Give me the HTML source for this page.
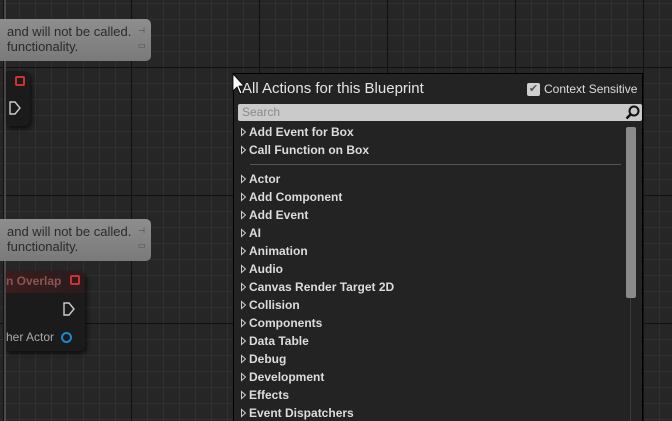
<!DOCTYPE html>
<html><head><meta charset="utf-8"><style>
*{margin:0;padding:0;box-sizing:border-box}
html{width:672px;height:421px;overflow:hidden}
body{width:672px;height:421px;overflow:hidden;position:relative;font-family:"Liberation Sans",sans-serif;
background-color:#262626;
background-image:
linear-gradient(90deg,#111 1px,transparent 1px),
linear-gradient(0deg,#111 1px,transparent 1px),
linear-gradient(90deg,#303030 1px,transparent 1px),
linear-gradient(0deg,#303030 1px,transparent 1px);
background-size:128px 128px,128px 128px,16px 16px,16px 16px;
background-position:3px 0,0 68px,3px 0,0 4px;}
.abs{position:absolute}
.cm{position:absolute;left:0;width:151px;height:42px;background:linear-gradient(#8e8e8e,#7a7a7a);border-radius:0 5px 5px 0;color:#2a2a2a;font-size:13px;line-height:15px;padding:5px 0 0 7px}
.cm .r{position:absolute;right:4px;top:4px;width:9px;height:14px;color:#444;font-size:8px}
.node{position:absolute;background:#1b1b1b;border-radius:0 6px 6px 0;box-shadow:2px 3px 4px rgba(0,0,0,.6)}
.pin{position:absolute;width:10px;height:10px;border:2px solid #c33;border-radius:2px}
.panel{position:absolute;left:233px;top:73px;width:410px;height:348px;background:#232323;border:1px solid #000;border-bottom:none;overflow:hidden}
.item{position:absolute;left:15px;color:#dcdcdc;font-weight:bold;font-size:12px;white-space:nowrap}
.tri{position:absolute;left:7px;width:6px;height:10px}
</style></head><body>
<div class="abs" style="left:4px;top:0;width:2px;height:421px;background:#4a4a4a"></div>
<div class="cm" style="top:19px">and will not be called.<br>functionality.<div class="r">⊣<br>▭</div></div>
<div class="cm" style="top:219px">and will not be called.<br>functionality.<div class="r">⊣<br>▭</div></div>
<div class="node" style="left:6px;top:71px;width:24px;height:55px">
<div class="pin" style="left:9px;top:5px"></div>
<svg class="abs" style="left:3px;top:30px" width="12" height="14"><path d="M1 1H6L11 7L6 13H1Z" fill="none" stroke="#ccc" stroke-width="1.4"/></svg>
</div>
<div class="node" style="left:6px;top:271px;width:79px;height:80px">
<div class="abs" style="left:0;top:0;width:79px;height:22px;background:linear-gradient(90deg,#3a1d1d,#2a1b1b);border-radius:0 6px 0 0"></div>
<div class="abs" style="left:0;top:3px;color:#8a5555;font-weight:bold;font-size:12px">n Overlap</div>
<div class="pin" style="left:64px;top:4px"></div>
<svg class="abs" style="left:57px;top:31px" width="12" height="14"><path d="M1 1H6L11 7L6 13H1Z" fill="none" stroke="#ccc" stroke-width="1.4"/></svg>
<div class="abs" style="left:0;top:59px;color:#aaa;font-size:12px">her Actor</div>
<div class="abs" style="left:55px;top:61px;width:11px;height:11px;border:2px solid #1a8ad0;border-radius:50%"></div>
</div>
<div class="panel">
<div class="abs" style="left:8px;top:6px;color:#e4e4e4;font-size:15px">All Actions for this Blueprint</div>
<div class="abs" style="left:293px;top:9px;width:13px;height:13px;background:#d0d0d0;border-radius:2px;color:#555;font-size:11px;line-height:13px;text-align:center">✔</div>
<div class="abs" style="left:310px;top:8px;color:#dcdcdc;font-size:12px">Context Sensitive</div>
<div class="abs" style="left:4px;top:30px;width:404px;height:17px;background:#cacaca;border-radius:2px;color:#8a8a8a;font-size:12px;padding:1px 4px">Search
<svg class="abs" style="right:2px;top:1px" width="15" height="15"><circle cx="9" cy="6" r="4.5" fill="none" stroke="#111" stroke-width="2"/><path d="M6 9L1.5 13.5" stroke="#111" stroke-width="2.5"/></svg></div>
<div class="abs" style="left:396px;top:56px;width:1px;height:304px;background:#3a3a3a"></div>
<div class="abs" style="left:392px;top:53px;width:10px;height:171px;background:#8a8a8a;border-radius:2px"></div>
<div class="abs" style="left:16px;top:90px;width:371px;height:1px;background:#555"></div>
<svg class="abs" style="left:6px;top:0" width="8" height="348">
<g fill="none" stroke="#ccc" stroke-width="1">
<path d="M1.5 54.5v7l4-3.5z"/><path d="M1.5 72.5v7l4-3.5z"/>
<path d="M1.5 101.5v7l4-3.5z"/><path d="M1.5 119.5v7l4-3.5z"/><path d="M1.5 137.5v7l4-3.5z"/><path d="M1.5 155.5v7l4-3.5z"/><path d="M1.5 173.5v7l4-3.5z"/><path d="M1.5 191.5v7l4-3.5z"/><path d="M1.5 209.5v7l4-3.5z"/><path d="M1.5 227.5v7l4-3.5z"/><path d="M1.5 245.5v7l4-3.5z"/><path d="M1.5 263.5v7l4-3.5z"/><path d="M1.5 281.5v7l4-3.5z"/><path d="M1.5 299.5v7l4-3.5z"/><path d="M1.5 317.5v7l4-3.5z"/><path d="M1.5 335.5v7l4-3.5z"/>
</g></svg>
<div class="item" style="top:51px">Add Event for Box</div>
<div class="item" style="top:69px">Call Function on Box</div>
<div class="item" style="top:98px">Actor</div>
<div class="item" style="top:116px">Add Component</div>
<div class="item" style="top:134px">Add Event</div>
<div class="item" style="top:152px">AI</div>
<div class="item" style="top:170px">Animation</div>
<div class="item" style="top:188px">Audio</div>
<div class="item" style="top:206px">Canvas Render Target 2D</div>
<div class="item" style="top:224px">Collision</div>
<div class="item" style="top:242px">Components</div>
<div class="item" style="top:260px">Data Table</div>
<div class="item" style="top:278px">Debug</div>
<div class="item" style="top:296px">Development</div>
<div class="item" style="top:314px">Effects</div>
<div class="item" style="top:332px">Event Dispatchers</div>
</div>
<svg class="abs" style="left:232px;top:73px" width="14" height="22"><path d="M1 1V18L5 14L8 21L10 20L7 13H12Z" fill="#fff" stroke="#000" stroke-width="0.8"/></svg>
</body></html>
